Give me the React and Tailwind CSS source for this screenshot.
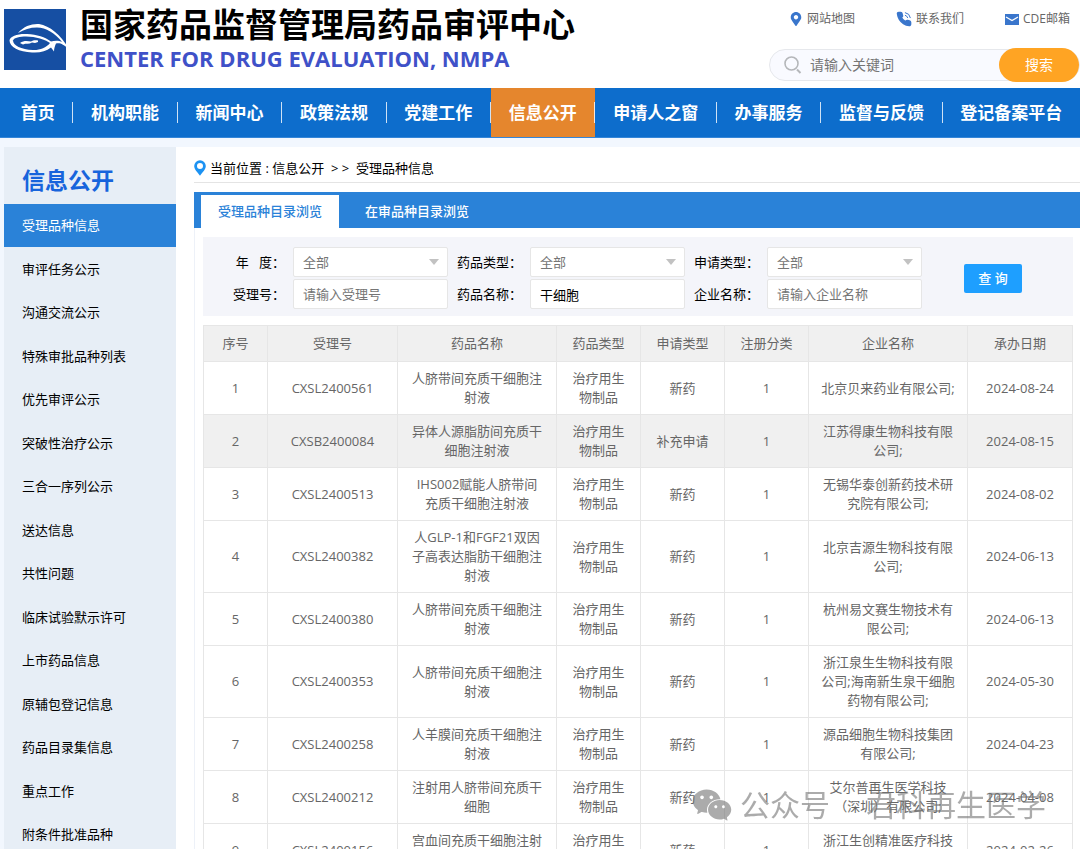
import { useState } from "react"
import { AiFillWechat } from "react-icons/ai"
import { FaMapMarkerAlt } from "react-icons/fa"

const navItems = ["首页", "机构职能", "新闻中心", "政策法规", "党建工作", "信息公开", "申请人之窗", "办事服务", "监督与反馈", "登记备案平台"]

const sideItems = [
    "受理品种信息",
    "审评任务公示",
    "沟通交流公示",
    "特殊审批品种列表",
    "优先审评公示",
    "突破性治疗公示",
    "三合一序列公示",
    "送达信息",
    "共性问题",
    "临床试验默示许可",
    "上市药品信息",
    "原辅包登记信息",
    "药品目录集信息",
    "重点工作",
    "附条件批准品种",
]

const columns = [
    { title: "序号", width: "w-16" },
    { title: "受理号", width: "w-[130px]" },
    { title: "药品名称", width: "w-[159px]" },
    { title: "药品类型", width: "w-[84px]" },
    { title: "申请类型", width: "w-[84px]" },
    { title: "注册分类", width: "w-[84px]" },
    { title: "企业名称", width: "w-[159px]" },
    { title: "承办日期", width: "w-[105px]" },
]

const records = [
    { no: "CXSL2400561", name: "人脐带间充质干细胞注射液", apply: "新药", company: "北京贝来药业有限公司;", date: "2024-08-24" },
    { no: "CXSB2400084", name: "异体人源脂肪间充质干细胞注射液", apply: "补充申请", company: "江苏得康生物科技有限公司;", date: "2024-08-15" },
    { no: "CXSL2400513", name: "IHS002赋能人脐带间充质干细胞注射液", apply: "新药", company: "无锡华泰创新药技术研究院有限公司;", date: "2024-08-02" },
    { no: "CXSL2400382", name: "人GLP-1和FGF21双因子高表达脂肪干细胞注射液", apply: "新药", company: "北京吉源生物科技有限公司;", date: "2024-06-13" },
    { no: "CXSL2400380", name: "人脐带间充质干细胞注射液", apply: "新药", company: "杭州易文赛生物技术有限公司;", date: "2024-06-13" },
    { no: "CXSL2400353", name: "人脐带间充质干细胞注射液", apply: "新药", company: "浙江泉生生物科技有限公司;海南新生泉干细胞药物有限公司;", date: "2024-05-30" },
    { no: "CXSL2400258", name: "人羊膜间充质干细胞注射液", apply: "新药", company: "源品细胞生物科技集团有限公司;", date: "2024-04-23" },
    { no: "CXSL2400212", name: "注射用人脐带间充质干细胞", apply: "新药", company: "艾尔普再生医学科技（深圳）有限公司;", date: "2024-04-08" },
    { no: "CXSL2400156", name: "宫血间充质干细胞注射液", apply: "新药", company: "浙江生创精准医疗科技有限公司;", date: "2024-02-26" },
]

function Logo() {
    return (
        <svg viewBox="0 0 68 61" className="h-[61px] w-[68px] shrink-0" aria-hidden="true">
            <rect width="62" height="61" fill="#164fa3" />
            <path d="M14 24C20 17 28 14.5 35 15C46 17 56 25 65 40C59 35 56 33.5 52 34.5C51 37 50 39 50 42.5L47 38.5C42 42.5 36 44 28 43.5C15 43 5.5 38 5.5 31.5C6 27 14 24.5 23 25C33 25.5 41 28 47 32.5C51 31.5 55 31.5 58 33C51 24 42 18.5 33 18.5C26 18.5 20 20.5 14 24Z" fill="#fff" />
            <path d="M9 31.5C10 28.5 16 27.5 22 27.5C32 27.5 41 30.5 46 34C42 39 36 41.2 29 41C17 40.5 9 36.5 9 31.5Z" fill="#164fa3" />
            <path d="M16 34C20 31 24 32 27 32.5C29 31 32 31 34 31.5L34 33L31 34L28 33.5C25 35.5 22 34 19 35.5Z" fill="#fff" />
        </svg>
    )
}

function PhoneIcon() {
    return (
        <svg viewBox="0 0 24 24" className="h-4 w-4" stroke="#3a76cc" strokeLinecap="round" strokeLinejoin="round" aria-hidden="true">
            <path fill="#3a76cc" strokeWidth="2" d="M22 16.92v3a2 2 0 0 1-2.18 2 19.79 19.79 0 0 1-8.63-3.07 19.5 19.5 0 0 1-6-6 19.79 19.79 0 0 1-3.07-8.67A2 2 0 0 1 4.11 2h3a2 2 0 0 1 2 1.72 12.84 12.84 0 0 0 .7 2.81 2 2 0 0 1-.45 2.11L8.09 9.91a16 16 0 0 0 6 6l1.27-1.27a2 2 0 0 1 2.11-.45 12.84 12.84 0 0 0 2.81.7A2 2 0 0 1 22 16.92z" />
            <path fill="none" strokeWidth="1.5" d="M14 2.5A9 9 0 0 1 21.5 10M14 6.5A5 5 0 0 1 17.5 10" />
        </svg>
    )
}

function MailIcon() {
    return (
        <svg viewBox="0 0 14 11" className="h-[11px] w-3.5" aria-hidden="true">
            <rect width="14" height="11" fill="#3a76cc" />
            <path d="M1 3L7 6.5L13 3" fill="none" stroke="#fff" strokeWidth="1.3" />
        </svg>
    )
}

function SearchIcon() {
    return (
        <svg viewBox="0 0 18 18" className="h-[18px] w-[18px] shrink-0" fill="none" stroke="#b5b7ba" aria-hidden="true">
            <circle cx="7.5" cy="7.5" r="6.5" strokeWidth="1.6" />
            <path d="M13 13.5L16.5 17" strokeWidth="2" />
        </svg>
    )
}

function PinIcon() {
    return (
        <svg viewBox="0 0 12 16" className="h-4 w-3" aria-hidden="true">
            <path fillRule="evenodd" fill="#1c92f2" d="M6 0.3A5.8 5.8 0 0 0 0.2 6.1C0.2 9.6 3.6 12.6 6 15.7C8.4 12.6 11.8 9.6 11.8 6.1A5.8 5.8 0 0 0 6 0.3ZM6 3A3 3 0 1 1 6 9A3 3 0 1 1 6 3Z" />
        </svg>
    )
}

function SelectField({ id, label }) {
    return (
        <div className="flex items-center">
            <label htmlFor={id} className="w-[82px] pr-2 text-right whitespace-pre">{label}</label>
            <div className="relative">
                <select id={id} className="h-[30px] w-[155px] appearance-none rounded-xs border border-[#e6e6e6] bg-white pl-[9px] text-[#757575]">
                    <option>全部</option>
                </select>
                <svg viewBox="0 0 10 6" className="pointer-events-none absolute top-3 right-[9px] h-1.5 w-2.5" aria-hidden="true">
                    <path d="M0 0H10L5 6Z" fill="#c2c2c2" />
                </svg>
            </div>
        </div>
    )
}

function TextField({ id, label, placeholder, value, onChange }) {
    return (
        <div className="flex items-center">
            <label htmlFor={id} className="w-[82px] pr-2 text-right">{label}</label>
            <input id={id} type="text" placeholder={placeholder} value={value} onChange={onChange} className="h-[30px] w-[155px] rounded-xs border border-[#e6e6e6] bg-white pl-[9px] placeholder:text-[#757575]" />
        </div>
    )
}

export default function App() {
    const [keyword, setKeyword] = useState("")
    const [form, setForm] = useState({ no: "", name: "干细胞", company: "" })

    const update = (key) => (e) => setForm(prev => ({ ...prev, [key]: e.target.value }))

    return (
        <div lang="zh-CN" className="min-h-screen overflow-x-hidden bg-[#f2f7fe] font-['Open_Sans','Noto_Sans_CJK_SC',sans-serif] text-[13px] leading-[19px] text-black">
            <header className="flex h-[88px] justify-between bg-white pl-1">
                <div className="flex gap-2 pt-[9px]">
                    <Logo />
                    <div className="whitespace-nowrap">
                        <h1 className="text-[33px] leading-8 font-bold">国家药品监督管理局药品审评中心</h1>
                        <p className="pt-1 text-[22px] leading-[26px] font-bold text-[#3f51c8]">CENTER FOR DRUG EVALUATION, NMPA</p>
                    </div>
                </div>
                <div className="flex w-[311px] flex-col gap-5 pt-[9px]">
                    <div className="flex justify-between pr-2.5 pl-5 text-xs leading-5 text-[#666]">
                        <a href="#map" className="flex items-center gap-1"><FaMapMarkerAlt className="h-3.5 w-3.5 text-[#3a76cc]" />网站地图</a>
                        <a href="#contact" className="flex items-center gap-1"><PhoneIcon />联系我们</a>
                        <a href="#mail" className="flex items-center gap-1"><MailIcon />CDE邮箱</a>
                    </div>
                    <form className="flex h-8 items-center rounded-full border border-[#e6e8ec] bg-[#f9faff] pl-3.5 text-sm" onSubmit={e => e.preventDefault()}>
                        <SearchIcon />
                        <input type="search" aria-label="请输入关键词" placeholder="请输入关键词" value={keyword} onChange={e => setKeyword(e.target.value)} className="min-w-0 flex-1 bg-transparent pl-2 placeholder:text-[#757575]" />
                        <button type="submit" className="h-[34px] w-20 shrink-0 rounded-full bg-[#ffa423] text-white">搜索</button>
                    </form>
                </div>
            </header>

            <nav className="flex h-[50px] border-b border-[#3586d8] bg-[#0d6dcc] pl-[3px] text-[17px] font-bold text-white">
                {navItems.map((item, i) => (
                    <a key={item} href={`#nav-${i}`} className={`flex flex-auto items-center whitespace-nowrap ${item === "信息公开" ? "bg-[#e5862d]" : ""}`}>
                        <span className="flex-1 text-center">{item}</span>
                        {i < navItems.length - 1 && <span className="h-[21px] w-px bg-white/80"></span>}
                    </a>
                ))}
            </nav>

            <div className="flex pt-[9px] pl-1">
                <aside className="w-[172px] shrink-0 bg-[#e7eef6]">
                    <h2 className="h-[57px] pt-2 pl-[18px] text-[23px] leading-[50px] font-bold text-[#1764dc]">信息公开</h2>
                    <ul>
                        {sideItems.map((item, i) => (
                            <li key={item} className="odd:h-[43px] even:h-11">
                                <a href={`#side-${i}`} className={`flex h-full items-center pl-[18px] ${i === 0 ? "bg-[#2a82d8] text-white" : ""}`}>{item}</a>
                            </li>
                        ))}
                    </ul>
                </aside>

                <main className="min-w-0 flex-1 bg-white pl-[18px]">
                    <div className="flex h-9 items-center gap-1 border-b border-[#e4e4e4] pt-[7px]">
                        <PinIcon />
                        <span className="whitespace-pre">当前位置 : 信息公开  &gt; &gt;  受理品种信息</span>
                    </div>

                    <div className="mt-[9px] border-l border-[#edf1f8]">
                        <div className="-ml-px flex h-9 items-end bg-[#2a82d8] pl-[7px] font-medium text-white">
                            <button type="button" className="h-[33px] w-[138px] bg-white text-[#2a82d8]">受理品种目录浏览</button>
                            <button type="button" className="h-[33px] w-[156px]">在审品种目录浏览</button>
                        </div>

                        <div className="pt-[9px] pr-[7px] pl-2">
                            <form className="flex items-center bg-[#f4f5fa] pt-2.5 pb-[7px] pl-2" onSubmit={e => e.preventDefault()}>
                                <div className="grid grid-cols-3 gap-y-0.5">
                                    <SelectField id="year" label={"年\u00a0\u00a0\u00a0度："} />
                                    <SelectField id="drug-type" label="药品类型：" />
                                    <SelectField id="apply-type" label="申请类型：" />
                                    <TextField id="accept-no" label="受理号：" placeholder="请输入受理号" value={form.no} onChange={update("no")} />
                                    <TextField id="drug-name" label="药品名称：" value={form.name} onChange={update("name")} />
                                    <TextField id="company" label="企业名称：" placeholder="请输入企业名称" value={form.company} onChange={update("company")} />
                                </div>
                                <button type="submit" className="ml-[42px] h-[29px] w-[58px] shrink-0 rounded-xs bg-[#1e9fff] font-medium text-white">查 询</button>
                            </form>

                            <table className="mt-[9px] w-full table-fixed border-collapse text-center text-[#666]">
                                <thead className="bg-[#f0f0f0]">
                                    <tr>
                                        {columns.map(col => (
                                            <th key={col.title} className={`h-9 border border-[#e6e6e6] font-normal ${col.width}`}>{col.title}</th>
                                        ))}
                                    </tr>
                                </thead>
                                <tbody>
                                    {records.map((row, i) => (
                                        <tr key={row.no} className={i === 1 ? "bg-[#f0f0f0]" : ""}>
                                            <td className="border border-[#e6e6e6] py-[7px]">{i + 1}</td>
                                            <td className="border border-[#e6e6e6] py-[7px]">{row.no}</td>
                                            <td className="border border-[#e6e6e6] px-3.5 py-[7px]">{row.name}</td>
                                            <td className="border border-[#e6e6e6] px-3.5 py-[7px]">治疗用生物制品</td>
                                            <td className="border border-[#e6e6e6] px-3 py-[7px]">{row.apply}</td>
                                            <td className="border border-[#e6e6e6] py-[7px]">1</td>
                                            <td className="border border-[#e6e6e6] px-3 py-[7px]">{row.company}</td>
                                            <td className="border border-[#e6e6e6] py-[7px]">{row.date}</td>
                                        </tr>
                                    ))}
                                </tbody>
                            </table>
                        </div>
                    </div>
                </main>
            </div>

            <div className="pointer-events-none fixed right-[34px] bottom-[22px] flex items-center gap-9 text-[30px] leading-10 whitespace-nowrap text-neutral-500/60">
                <span className="flex items-center gap-1.5">
                    <AiFillWechat className="h-11 w-11" />
                    公众号
                </span>
                <span>君科再生医学</span>
            </div>
        </div>
    )
}
